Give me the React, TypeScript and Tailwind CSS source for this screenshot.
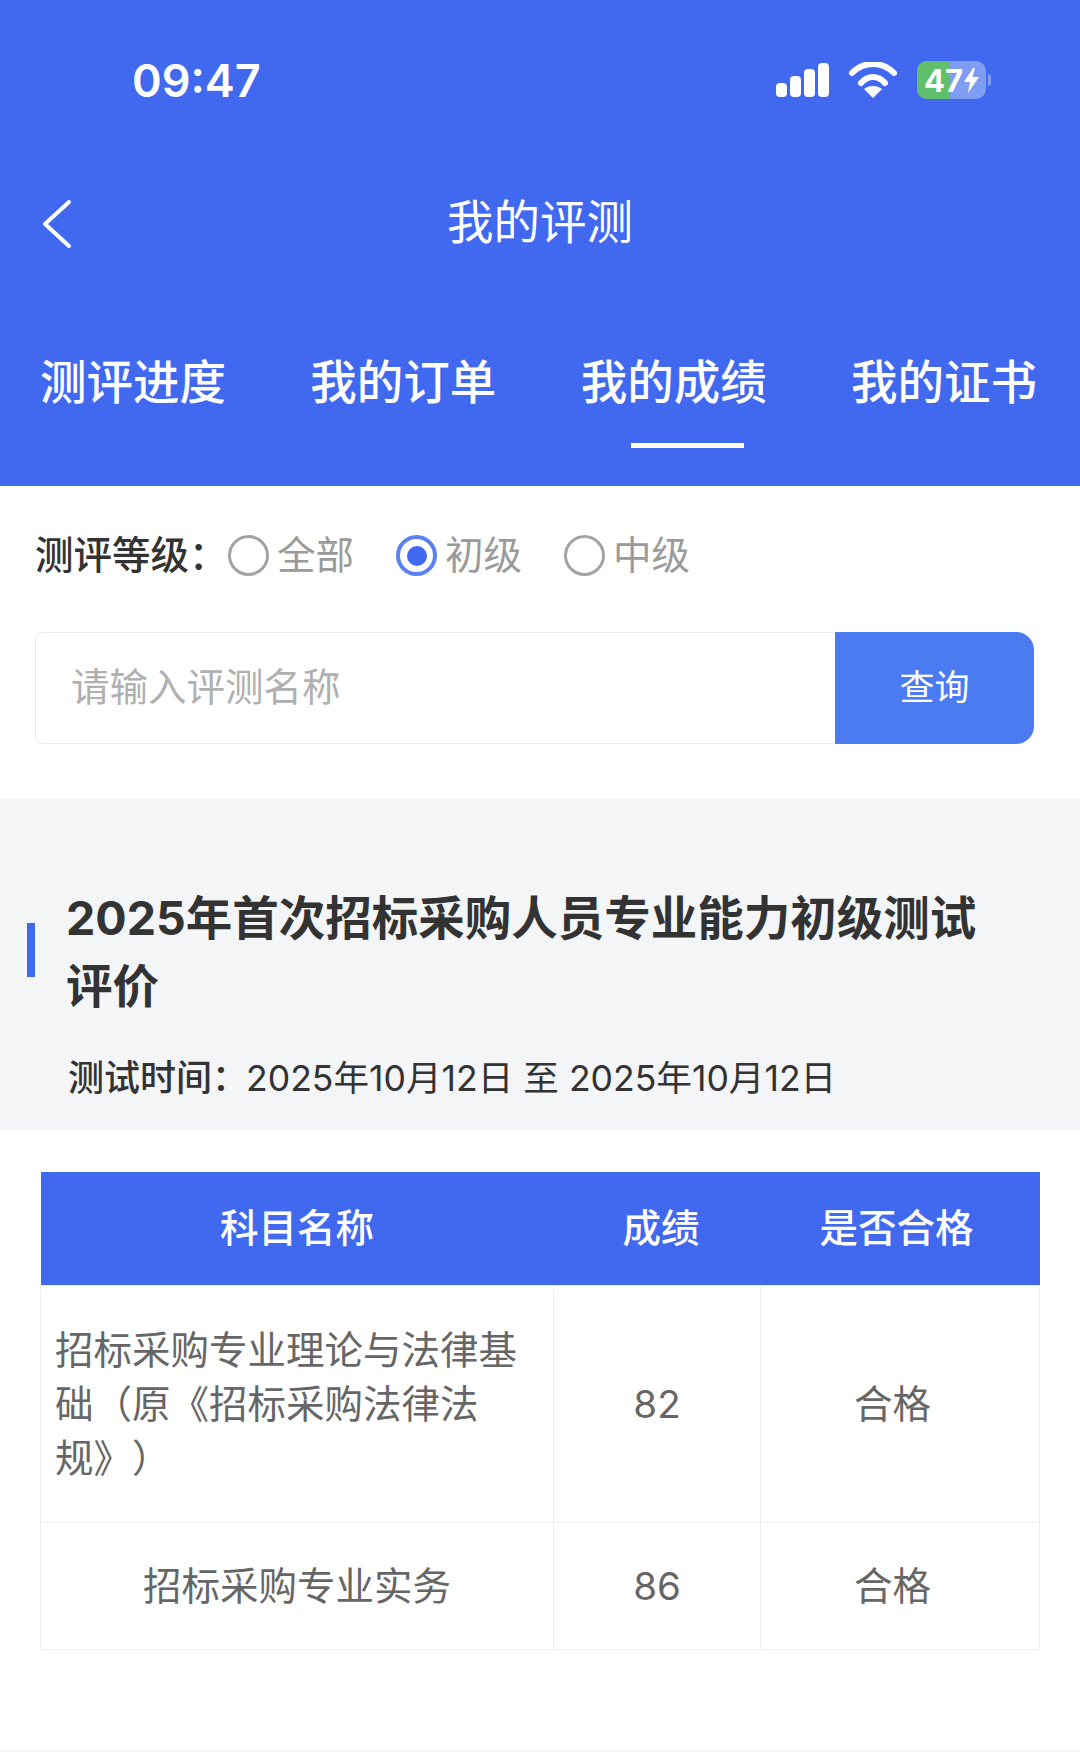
const font = { fontFamily: '"Inter", "Noto Sans CJK SC", "Noto Sans", sans-serif' };

function StatusIcons() {
  return (
    <div className="flex items-center">
      <svg width="56" height="36" viewBox="0 0 56 36" fill="white" className="block">
        <rect x="1" y="21" width="11" height="14" rx="4" />
        <rect x="15" y="14" width="11" height="21" rx="4" />
        <rect x="29" y="7" width="11" height="28" rx="4" />
        <rect x="43" y="1" width="11" height="34" rx="4" />
      </svg>
      <svg width="48" height="36" viewBox="0 0 48 36" fill="none" className="ml-[18px] block">
        <path d="M3 11C15 -1 33 -1 45 11" stroke="white" strokeWidth="6" strokeLinecap="round" />
        <path d="M12 21C19 13 29 13 36 21" stroke="white" strokeWidth="6" strokeLinecap="round" />
        <path d="M24 36L15 27C20 23 28 23 33 27Z" fill="white" />
      </svg>
      <div className="ml-[20px] flex items-center">
        <div className="relative flex h-[38px] w-[69px] items-center overflow-hidden rounded-[10px] bg-[#7f9df2]">
          <div className="absolute inset-y-0 left-0 w-[33px] bg-[#5fbf6a]" />
          <span className="relative ml-[7px] text-[31px] font-bold leading-none text-white">47</span>
          <svg width="15" height="25" viewBox="0 0 15 25" fill="white" className="relative ml-[1px]">
            <path d="M9 0L0 14H6L4 25L15 9H8.5L11 0Z" />
          </svg>
        </div>
        <div className="ml-[2px] h-[12px] w-[3px] rounded-r-full bg-[#7f9df2]" />
      </div>
    </div>
  );
}

function Radio({ label, checked }: { label: string; checked?: boolean }) {
  return (
    <div className="flex w-[168px] items-center">
      {checked ? (
        <span className="flex h-[41px] w-[41px] items-center justify-center rounded-full border-[4px] border-[#5b80f2]">
          <span className="h-[20px] w-[20px] rounded-full bg-[#4169f0]" />
        </span>
      ) : (
        <span className="h-[41px] w-[41px] rounded-full border-[3px] border-[#a3a3a3]" />
      )}
      <span className="ml-[8px] text-[38.5px] leading-none text-[#9a9a9a]">{label}</span>
    </div>
  );
}

const tabs = ["测评进度", "我的订单", "我的成绩", "我的证书"];

const rows = [
  { name: "招标采购专业理论与法律基础（原《招标采购法律法规》）", score: "82", left: true },
  { name: "招标采购专业实务", score: "86", left: false },
];

export default function App() {
  return (
    <div className="h-[1752px] w-[1080px] overflow-hidden bg-white [text-spacing-trim:space-all]" style={font}>
      <header className="h-[486px] bg-[#4169f0] text-white">
        <div className="flex h-[160px] items-center justify-between pl-[132px] pr-[89px]">
          <span className="text-[45px] font-semibold leading-none">09:47</span>
          <StatusIcons />
        </div>
        <div className="relative flex h-[125px] items-center justify-center">
          <svg width="32" height="50" viewBox="0 0 32 50" fill="none" className="absolute left-[41px] top-[39px]">
            <path d="M28 3L4 25L28 47" stroke="white" strokeWidth="4" strokeLinecap="round" strokeLinejoin="round" />
          </svg>
          <span className="text-[46.5px] leading-none">我的评测</span>
        </div>
        <nav className="mt-[66px] flex justify-between pl-[40px] pr-[43px]">
          {tabs.map((t) => (
            <span key={t} className="text-[46.5px] font-medium leading-[62px]">
              {t}
            </span>
          ))}
        </nav>
        <div className="ml-[631px] mt-[30px] h-[5px] w-[113px] bg-white" />
      </header>

      <section className="px-[35px]">
        <div className="flex h-[146px] items-center">
          <span className="w-[193px] pb-[8px] text-[38.5px] font-medium leading-none text-[#333333]">测评等级：</span>
          <div className="flex pb-[7px]">
            <Radio label="全部" />
            <Radio label="初级" checked />
            <Radio label="中级" />
          </div>
        </div>
        <div className="flex h-[112px]">
          <div className="flex w-[800px] items-center rounded-l-[8px] border border-r-0 border-[#ececec] pb-[2px] pl-[35px] text-[38.5px] leading-none text-[#b0b0b0]">
            请输入评测名称
          </div>
          <button className="flex w-[199px] items-center justify-center rounded-r-[18px] bg-[#4a7bf0] pb-[2px] text-[35px] leading-none text-white">
            查询
          </button>
        </div>
      </section>

      <section className="mt-[55px] h-[331px] bg-[#f4f5f7] pt-[81px]">
        <div className="flex items-center">
          <div className="ml-[27px] h-[54px] w-[8px] bg-[#4169f0]" />
          <h1 className="ml-[31px] w-[940px] pt-[4px] text-[46.5px] font-bold leading-[68px] text-[#333333]">
            2025年首次招标采购人员专业能力初级测试评价
          </h1>
        </div>
        <p className="ml-[68px] mt-[33px] text-[36px] leading-[50px] text-[#333333]">
          <span className="font-medium">测试时间：</span>
          <span className="ml-[-2px] text-[35.6px]">2025年10月12日 至 2025年10月12日</span>
        </p>
      </section>

      <section className="px-[40px] pt-[42px]">
        <table className="w-[999px] table-fixed border-collapse text-[38.5px] leading-[54px]">
          <colgroup>
            <col className="w-[513px]" />
            <col className="w-[207px]" />
            <col className="w-[279px]" />
          </colgroup>
          <thead>
            <tr className="h-[113px] bg-[#4169f0] text-white">
              <th className="font-medium">科目名称</th>
              <th className="pl-[8px] font-medium">成绩</th>
              <th className="pr-[7px] font-medium">是否合格</th>
            </tr>
          </thead>
          <tbody className="text-[#666666]">
            {rows.map((r) => (
              <tr key={r.score} className={r.left ? "h-[237px]" : "h-[127px]"}>
                <td className={`border border-[#eeeeee] pl-[14px] ${r.left ? "pr-[30px] text-left" : "pr-[14px] text-center"}`}>
                  {r.name}
                </td>
                <td className="border border-[#eeeeee] text-center">{r.score}</td>
                <td className="border border-[#eeeeee] pr-[15px] text-center">合格</td>
              </tr>
            ))}
          </tbody>
        </table>
      </section>

      <div className="mt-[100px] h-[3px] bg-[#f4f5f7]" />
    </div>
  );
}
